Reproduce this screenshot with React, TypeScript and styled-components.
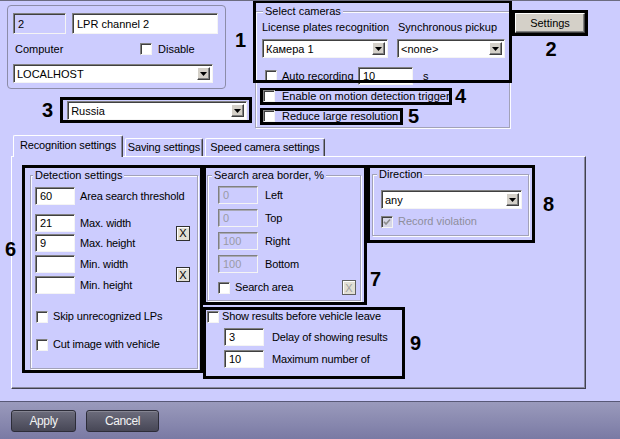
import React from "react";
import styled, { createGlobalStyle } from "styled-components";

const LAV = "#ccccfe";

const GlobalStyle = createGlobalStyle`
  html, body { margin: 0; padding: 0; background: ${LAV}; }
  body {
    font-family: "Liberation Sans", Arial, sans-serif;
    font-size: 11px;
    color: #000;
  }
  * { box-sizing: border-box; }
`;

const Window = styled.div`
  position: relative;
  width: 620px;
  height: 439px;
  display: flex;
  flex-direction: column;
  align-items: flex-start;
  background: ${LAV};
  border-top: 1px solid #6c6c80;
  overflow: hidden;
`;

/* ---------- small controls ---------- */

const Field = styled.div<{ $w: number; $h?: number; $muted?: boolean; $readonly?: boolean }>`
  width: ${(p) => p.$w}px;
  height: ${(p) => p.$h ?? 18}px;
  flex: none;
  display: flex;
  align-items: center;
  padding-left: 4px;
  background: ${(p) => (p.$muted || p.$readonly ? LAV : "#fff")};
  color: ${(p) => (p.$muted ? "#9a9aa6" : "#000")};
  border: 1px solid;
  border-color: #808080 #f4f4f4 #f4f4f4 #808080;
  box-shadow: ${(p) => (p.$muted ? "inset 1px 1px 0 #a8a8b4" : "inset 1px 1px 0 #404040")};
  white-space: nowrap;
`;

const ComboBox = styled.div<{ $w: number }>`
  width: ${(p) => p.$w}px;
  height: 19px;
  flex: none;
  display: flex;
  align-items: stretch;
  padding: 2px;
  background: #fff;
  border: 1px solid;
  border-color: #808080 #f4f4f4 #f4f4f4 #808080;
  box-shadow: inset 1px 1px 0 #404040;
`;

const ComboText = styled.span`
  flex: 1;
  display: flex;
  align-items: center;
  padding-left: 1px;
  white-space: nowrap;
  overflow: hidden;
`;

const ArrowBtn = styled.span`
  width: 13px;
  flex: none;
  display: flex;
  align-items: center;
  justify-content: center;
  background: #d4d0c8;
  border: 1px solid;
  border-color: #fff #404040 #404040 #fff;
  box-shadow: inset -1px -1px 0 #808080;
`;

const Combo = ({ w, value }: { w: number; value: string }) => (
  <ComboBox $w={w}>
    <ComboText>{value}</ComboText>
    <ArrowBtn>
      <svg width="7" height="4" viewBox="0 0 7 4">
        <polygon points="0,0 7,0 3.5,4" fill="#000" />
      </svg>
    </ArrowBtn>
  </ComboBox>
);

const CheckBox = styled.span<{ $disabled?: boolean }>`
  width: 12px;
  height: 12px;
  flex: none;
  display: inline-flex;
  align-items: center;
  justify-content: center;
  background: ${(p) => (p.$disabled ? "#d6d6e6" : "#fff")};
  border: 1px solid;
  border-color: #808080 #f4f4f4 #f4f4f4 #808080;
  box-shadow: inset 1px 1px 0 #404040;
`;

const Check = ({ checked, disabled }: { checked?: boolean; disabled?: boolean }) => (
  <CheckBox $disabled={disabled}>
    {checked && (
      <svg width="8" height="8" viewBox="0 0 8 8">
        <path d="M1 3.8 L3 6 L7 1.4" stroke={disabled ? "#8c8c8c" : "#000"} strokeWidth="1.6" fill="none" />
      </svg>
    )}
  </CheckBox>
);

const XBtn = styled.span<{ $disabled?: boolean }>`
  width: 14px;
  height: 15px;
  flex: none;
  display: inline-flex;
  align-items: center;
  justify-content: center;
  font-size: 11px;
  background: #e2dfd4;
  color: ${(p) => (p.$disabled ? "#a0a0a0" : "#000")};
  border: 1px solid ${(p) => (p.$disabled ? "#606060" : "#303030")};
  box-shadow: inset 1px 1px 0 #fff;
`;

const PushButton = styled.div`
  width: 70px;
  height: 20px;
  display: flex;
  align-items: center;
  justify-content: center;
  background: #d4d0c8;
  border: 1px solid;
  border-color: #fff #404040 #404040 #fff;
  box-shadow: inset -1px -1px 0 #808080;
`;

const Text = styled.span<{ $w?: number; $muted?: boolean }>`
  white-space: nowrap;
  line-height: 13px;
  color: ${(p) => (p.$muted ? "#8e8e9c" : "#000")};
  ${(p) => (p.$w ? `width: ${p.$w}px; flex: none;` : "")}
`;

const Narrow = styled(Text)`
  letter-spacing: -0.15px;
`;

/* ---------- annotations ---------- */

const Outline = styled.div<{ $w?: number; $h?: number; $pad?: string }>`
  flex: none;
  border: 3px solid #000;
  ${(p) => (p.$w ? `width: ${p.$w}px;` : "")}
  ${(p) => (p.$h ? `height: ${p.$h}px;` : "")}
  padding: ${(p) => p.$pad ?? "0"};
`;

const Num = styled.span<{ $ml?: number; $mt?: number }>`
  flex: none;
  font-family: "Liberation Sans", Arial, sans-serif;
  font-weight: bold;
  font-size: 20px;
  line-height: 20px;
  margin-left: ${(p) => p.$ml ?? 0}px;
  margin-top: ${(p) => p.$mt ?? 0}px;
`;

const NumRow = styled.div<{ $mt?: number }>`
  display: flex;
  align-items: center;
  margin-top: ${(p) => p.$mt ?? 0}px;
`;

/* ---------- group boxes ---------- */

const Group = styled.fieldset<{ $w: number; $h: number }>`
  width: ${(p) => p.$w}px;
  height: ${(p) => p.$h}px;
  flex: none;
  margin: 0;
  padding: 0;
  min-width: 0;
  border: 1px solid #a2a2b8;
  box-shadow: 1px 1px 0 #fbfbff, inset 1px 1px 0 #fbfbff;
`;

const Legend = styled.legend<{ $ml: number }>`
  margin-left: ${(p) => p.$ml}px;
  padding: 0 2px;
  line-height: 13px;
  background: ${LAV};
`;

const GroupBody = styled.div<{ $pad: string; $gap?: number }>`
  display: flex;
  flex-direction: column;
  gap: ${(p) => p.$gap ?? 0}px;
  padding: ${(p) => p.$pad};
`;

/* ---------- top area ---------- */

const TopSection = styled.div`
  display: flex;
  align-items: flex-start;
  width: 620px;
  height: 127px;
  flex: none;
`;

const LeftColumn = styled.div`
  width: 253px;
  flex: none;
  display: flex;
  flex-direction: column;
`;

const ChannelRow = styled.div`
  display: flex;
  align-items: flex-start;
  padding-top: 4px;
`;

const ChannelPanel = styled.div`
  margin-left: 7px;
  width: 219px;
  height: 84px;
  flex: none;
  border: 1px solid #8c8ca8;
  border-radius: 4px;
  padding: 7px 0 0 5px;
  display: flex;
  flex-direction: column;
`;

const PanelLine = styled.div<{ $h?: number; $gap?: number; $pl?: number }>`
  display: flex;
  align-items: center;
  height: ${(p) => (p.$h ? `${p.$h}px` : "auto")};
  gap: ${(p) => p.$gap ?? 0}px;
  padding-left: ${(p) => p.$pl ?? 0}px;
`;

const CountryRow = styled.div`
  display: flex;
  align-items: center;
  margin-top: 8px;
  padding-left: 42px;
  gap: 7px;
`;

const CamerasWrap = styled.div`
  position: relative;
  flex: none;
  margin-top: 4px;
  margin-left: 2px;
`;

const AnnotationFrame = styled.div`
  position: absolute;
  left: -2px;
  top: -5px;
  width: 259px;
  height: 83px;
  border: 3px solid #000;
  pointer-events: none;
`;

const Row = styled.div<{ $mt?: number; $pl?: number; $gap?: number; $h?: number; $top?: boolean }>`
  display: flex;
  align-items: ${(p) => (p.$top ? "flex-start" : "center")};
  margin-top: ${(p) => p.$mt ?? 0}px;
  padding-left: ${(p) => p.$pl ?? 0}px;
  gap: ${(p) => p.$gap ?? 0}px;
  ${(p) => (p.$h ? `height: ${p.$h}px;` : "")}
`;

const InlineOutline = styled(Outline)`
  height: 17px;
  display: flex;
  align-items: center;
  gap: 7px;
`;

const SettingsColumn = styled.div`
  display: flex;
  flex-direction: column;
  align-items: center;
  flex: none;
  margin-left: 2px;
  margin-top: 9px;
`;

/* ---------- tabs ---------- */

const TabsArea = styled.div`
  flex: none;
  margin-top: 7px;
  margin-left: 11px;
  width: 575px;
`;

const TabStrip = styled.div`
  display: flex;
  align-items: flex-end;
  height: 21px;
  padding-left: 2px;
`;

const Tab = styled.div<{ $w: number; $active?: boolean }>`
  position: relative;
  z-index: ${(p) => (p.$active ? 1 : 0)};
  width: ${(p) => p.$w}px;
  height: ${(p) => (p.$active ? 22 : 18)}px;
  margin-bottom: ${(p) => (p.$active ? -1 : 0)}px;
  margin-right: 2px;
  display: flex;
  align-items: center;
  justify-content: center;
  padding-bottom: ${(p) => (p.$active ? 3 : 1)}px;
  background: ${LAV};
  border-top: 1px solid #fff;
  border-left: 1px solid #fff;
  border-right: 1px solid #404040;
  border-radius: 2px 2px 0 0;
  box-shadow: inset -1px 0 0 #8a8aa0;
  white-space: nowrap;
  letter-spacing: -0.15px;
`;

const TabPanel = styled.div`
  position: relative;
  width: 575px;
  height: 233px;
  display: flex;
  align-items: flex-start;
  padding: 8px 0 0 10px;
  border-top: 1px solid #fff;
  border-left: 1px solid #fff;
  border-right: 1px solid #404050;
  border-bottom: 1px solid #404050;
  box-shadow: inset -1px -1px 0 #8a8aa0;
`;

const FloatingNum = styled(Num)`
  position: absolute;
  left: -7px;
  top: 82px;
`;

const RightColumn = styled.div`
  display: flex;
  flex-direction: column;
  flex: none;
`;

const DirectionColumn = styled.div`
  display: flex;
  flex-direction: column;
  align-items: flex-start;
  flex: none;
`;

const Pair = styled.div<{ $mt: number }>`
  display: flex;
  align-items: center;
  margin-top: ${(p) => p.$mt}px;
`;

const PairRows = styled.div<{ $gap: number }>`
  display: flex;
  flex-direction: column;
  gap: ${(p) => p.$gap}px;
  flex: 1;
`;

const RightX = styled(XBtn)`
  margin-left: auto;
  margin-right: 7px;
`;

const SearchX = styled(XBtn)`
  margin-left: auto;
  margin-right: 4px;
`;

/* ---------- bottom bar ---------- */

const BottomBar = styled.div`
  margin-top: auto;
  width: 620px;
  height: 38px;
  flex: none;
  border-top: 1px solid #585876;
  background: linear-gradient(#9a9abc, #7a7aa4);
  display: flex;
  align-items: flex-start;
  gap: 10px;
  padding: 8px 0 0 11px;
`;

const DarkButton = styled.div<{ $w: number }>`
  width: ${(p) => p.$w}px;
  height: 22px;
  display: flex;
  align-items: center;
  justify-content: center;
  border-radius: 3px;
  border: 1px solid #2c2c38;
  background: linear-gradient(#6c6c7c, #474756);
  box-shadow: inset 0 1px 0 rgba(255, 255, 255, 0.18);
  color: #f2f2f2;
  font-size: 12px;
  letter-spacing: -0.4px;
`;

const LabeledInput = ({ value, label, muted, gap }: { value: string; label: string; muted?: boolean; gap: number }) => (
  <Row $gap={gap} $h={18}>
    <Field $w={40} $muted={muted}>{value}</Field>
    <Narrow>{label}</Narrow>
  </Row>
);

export default function App() {
  return (
    <>
      <GlobalStyle />
      <Window>
        <TopSection>
          <LeftColumn>
            <ChannelRow>
              <ChannelPanel>
                <PanelLine $gap={6}>
                  <Field $w={53} $h={21} $readonly>2</Field>
                  <Field $w={146} $h={21}>LPR channel 2</Field>
                </PanelLine>
                <PanelLine $h={30} $pl={2} $gap={6}>
                  <Text $w={119}>Computer</Text>
                  <Check />
                  <Text>Disable</Text>
                </PanelLine>
                <Combo w={200} value="LOCALHOST" />
              </ChannelPanel>
              <Num $ml={9} $mt={25}>1</Num>
            </ChannelRow>
            <CountryRow>
              <Num>3</Num>
              <Outline $pad="1px 2px 0 4px">
                <Combo w={180} value="Russia" />
              </Outline>
            </CountryRow>
          </LeftColumn>

          <CamerasWrap>
            <Group $w={255} $h={123}>
              <Legend $ml={7}>Select cameras</Legend>
              <GroupBody $pad="3px 0 0 4px">
                <Row $pl={2}>
                  <Text $w={136}>License plates recognition</Text>
                  <Text>Synchronous pickup</Text>
                </Row>
                <Row $mt={5} $pl={2} $gap={9}>
                  <Combo w={126} value="Камера 1" />
                  <Combo w={108} value="<none>" />
                </Row>
                <Row $mt={9} $pl={5} $h={18} $gap={5}>
                  <Check />
                  <Text $w={71}>Auto recording</Text>
                  <Field $w={55}>10</Field>
                  <Text style={{ marginLeft: 5 }}>s</Text>
                </Row>
                <NumRow $mt={1}>
                  <InlineOutline $w={192}>
                    <Check />
                    <Text>Enable on motion detection trigger</Text>
                  </InlineOutline>
                  <Num $ml={3}>4</Num>
                </NumRow>
                <NumRow>
                  <InlineOutline $w={143}>
                    <Check />
                    <Text>Reduce large resolution</Text>
                  </InlineOutline>
                  <Num $ml={5}>5</Num>
                </NumRow>
              </GroupBody>
            </Group>
            <AnnotationFrame />
          </CamerasWrap>

          <SettingsColumn>
            <Outline>
              <PushButton>Settings</PushButton>
            </Outline>
            <Num $mt={3} $ml={2}>2</Num>
          </SettingsColumn>
        </TopSection>

        <TabsArea>
          <TabStrip>
            <Tab $w={110} $active>Recognition settings</Tab>
            <Tab $w={78}>Saving settings</Tab>
            <Tab $w={120}>Speed camera settings</Tab>
          </TabStrip>
          <TabPanel>
            <FloatingNum>6</FloatingNum>
            <Outline $w={181} $h={208} $pad="1px 0 0 5px">
              <Group $w={168} $h={200}>
                <Legend $ml={2}>Detection settings</Legend>
                <GroupBody $pad="5px 0 0 4px">
                  <LabeledInput value="60" label="Area search threshold" gap={5} />
                  <Pair $mt={9}>
                    <PairRows $gap={2}>
                      <LabeledInput value="21" label="Max. width" gap={5} />
                      <LabeledInput value="9" label="Max. height" gap={5} />
                    </PairRows>
                    <RightX>X</RightX>
                  </Pair>
                  <Pair $mt={3}>
                    <PairRows $gap={3}>
                      <LabeledInput value="" label="Min. width" gap={5} />
                      <LabeledInput value="" label="Min. height" gap={5} />
                    </PairRows>
                    <RightX>X</RightX>
                  </Pair>
                  <Row $mt={16} $pl={1} $gap={5} $h={13}>
                    <Check />
                    <Narrow>Skip unrecognized LPs</Narrow>
                  </Row>
                  <Row $mt={15} $pl={1} $gap={5} $h={13}>
                    <Check />
                    <Narrow>Cut image with vehicle</Narrow>
                  </Row>
                </GroupBody>
              </Group>
            </Outline>

            <RightColumn>
              <Row $top>
                <Outline $w={164} $h={140} $pad="1px 0 0 1px">
                  <Group $w={154} $h={132}>
                    <Legend $ml={4}>Search area border, %</Legend>
                    <GroupBody $pad="4px 0 0 10px" $gap={5}>
                      <LabeledInput value="0" label="Left" muted gap={7} />
                      <LabeledInput value="0" label="Top" muted gap={7} />
                      <LabeledInput value="100" label="Right" muted gap={7} />
                      <LabeledInput value="100" label="Bottom" muted gap={7} />
                      <Row $mt={2} $h={15} $gap={5}>
                        <Check />
                        <Narrow>Search area</Narrow>
                        <SearchX $disabled>X</SearchX>
                      </Row>
                    </GroupBody>
                  </Group>
                </Outline>
                <DirectionColumn>
                  <NumRow>
                    <Outline $w={168} $h={78} $pad="0 0 0 2px">
                      <Group $w={157} $h={68}>
                        <Legend $ml={4}>Direction</Legend>
                        <GroupBody $pad="9px 0 0 8px">
                          <Combo w={141} value="any" />
                          <Row $mt={6} $gap={5} $h={13}>
                            <Check checked disabled />
                            <Text $muted>Record violation</Text>
                          </Row>
                        </GroupBody>
                      </Group>
                    </Outline>
                    <Num $ml={8}>8</Num>
                  </NumRow>
                  <Num $ml={3} $mt={26}>7</Num>
                </DirectionColumn>
              </Row>
              <NumRow $mt={2}>
                <Outline $w={202} $h={72} $pad="0 0 0 1px">
                  <Row $h={13} $gap={3}>
                    <Check />
                    <Narrow>Show results before vehicle leave</Narrow>
                  </Row>
                  <Row $mt={5} $pl={17} $gap={8} $h={18}>
                    <Field $w={40}>3</Field>
                    <Narrow>Delay of showing results</Narrow>
                  </Row>
                  <Row $mt={4} $pl={17} $gap={8} $h={18}>
                    <Field $w={40}>10</Field>
                    <Narrow>Maximum number of</Narrow>
                  </Row>
                </Outline>
                <Num $ml={5}>9</Num>
              </NumRow>
            </RightColumn>
          </TabPanel>
        </TabsArea>

        <BottomBar>
          <DarkButton $w={65}>Apply</DarkButton>
          <DarkButton $w={73}>Cancel</DarkButton>
        </BottomBar>
      </Window>
    </>
  );
}
